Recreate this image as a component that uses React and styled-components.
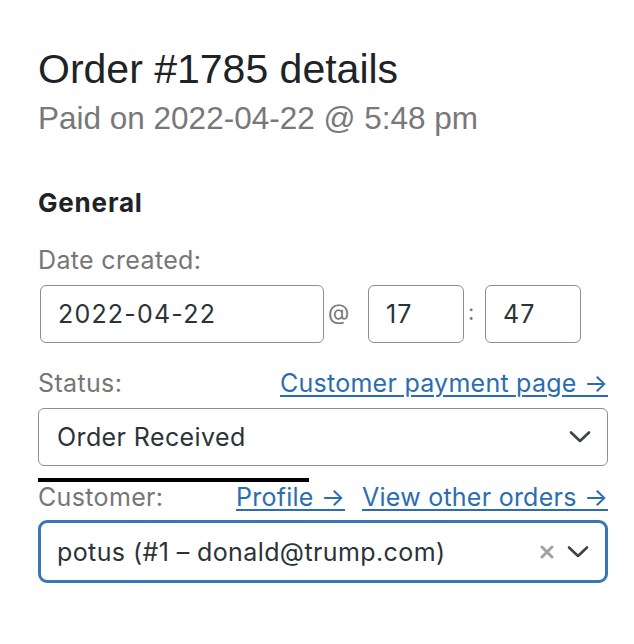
import React from "react";
import styled, { createGlobalStyle } from "styled-components";

const Global = createGlobalStyle`
  html, body { margin: 0; padding: 0; background: #fff; }
  body { font-family: Inter, "Noto Sans", sans-serif; -webkit-font-smoothing: antialiased; }
`;

const Panel = styled.div`
  width: 634px;
  box-sizing: border-box;
  padding: 46px 26px 40px 38px;
  display: flex;
  flex-direction: column;
`;

const Title = styled.h2`
  margin: 0;
  font-family: "Liberation Sans", Arial, sans-serif;
  font-weight: 400;
  font-size: 41px;
  line-height: 46px;
  color: #1d2327;
`;

const Subtitle = styled.p`
  margin: 7px 0 0;
  font-family: "Liberation Sans", Arial, sans-serif;
  font-size: 31.5px;
  line-height: 38px;
  color: #787878;
`;

const SectionHeading = styled.h3`
  margin: 50px 0 0;
  font-size: 26px;
  line-height: 32px;
  font-weight: 700;
  letter-spacing: 0.8px;
  color: #1d2327;
`;

const LabelRow = styled.div`
  margin-top: ${(p) => p.$top}px;
  display: flex;
  align-items: baseline;
  gap: 17px;
`;

const Label = styled.span`
  font-size: 25px;
  line-height: 30px;
  letter-spacing: 0.35px;
  color: #767676;
  margin-right: auto;
`;

const Link = styled.a`
  font-size: 25px;
  line-height: 30px;
  letter-spacing: 0.25px;
  color: #2a6eb0;
  text-decoration: underline;
  text-underline-offset: 3px;
  text-decoration-thickness: 2px;
  white-space: nowrap;
`;

const DateRow = styled.div`
  margin-top: 10px;
  display: flex;
  align-items: center;
`;

const Field = styled.div`
  box-sizing: border-box;
  width: ${(p) => p.$w}px;
  margin-left: ${(p) => p.$ml || 0}px;
  height: 58px;
  border: 1.5px solid #8c8f94;
  border-radius: 6px;
  padding: 0 17px;
  display: flex;
  align-items: center;
  font-size: 25px;
  letter-spacing: 1.2px;
  color: #2c3338;
`;

const Sep = styled.span`
  box-sizing: border-box;
  width: ${(p) => p.$w}px;
  padding-left: ${(p) => p.$pl}px;
  font-size: ${(p) => p.$size}px;
  color: #787878;
  margin-top: -4px;
`;

const Select = styled.div`
  margin-top: ${(p) => p.$top}px;
  box-sizing: border-box;
  height: ${(p) => (p.$focused ? 63 : 58)}px;
  border: ${(p) => (p.$focused ? "3.5px solid #3877b3" : "1.5px solid #8c8f94")};
  border-radius: ${(p) => (p.$focused ? 9 : 6)}px;
  padding: 0 16px 0 ${(p) => (p.$focused ? 16 : 18)}px;
  display: flex;
  align-items: center;
  gap: 13px;
  font-size: 25px;
  letter-spacing: 0.4px;
  color: #2c3338;
`;

const Value = styled.span`
  flex: 1;
`;

const Clear = styled.span`
  display: flex;
  align-items: center;
`;

const Rule = styled.div`
  margin-top: 12px;
  width: 271px;
  height: 4px;
  background: #000;
`;

const Chevron = () => (
  <svg width="22" height="14" viewBox="0 0 22 14" fill="none">
    <path d="M2 2.5 L11 11 L20 2.5" stroke="#3c434a" strokeWidth="2.6" strokeLinecap="round" strokeLinejoin="round" />
  </svg>
);

const Cross = () => (
  <svg width="14" height="14" viewBox="0 0 14 14" fill="none">
    <path d="M2 2 L12 12 M12 2 L2 12" stroke="#a0a3a6" strokeWidth="3" strokeLinecap="round" />
  </svg>
);

export default function App() {
  return (
    <>
      <Global />
      <Panel>
        <Title>Order #1785 details</Title>
        <Subtitle>Paid on 2022-04-22 @ 5:48 pm</Subtitle>

        <SectionHeading>General</SectionHeading>

        <LabelRow $top={26}>
          <Label>Date created:</Label>
        </LabelRow>
        <DateRow>
          <Field $w={284} $ml={2}>2022-04-22</Field>
          <Sep $w={44} $pl={4} $size={22}>@</Sep>
          <Field $w={96}>17</Field>
          <Sep $w={21} $pl={4} $size={22}>:</Sep>
          <Field $w={96}>47</Field>
        </DateRow>

        <LabelRow $top={25}>
          <Label>Status:</Label>
          <Link href="#">Customer payment page →</Link>
        </LabelRow>
        <Select $top={10}>
          <Value>Order Received</Value>
          <Chevron />
        </Select>

        <Rule />

        <LabelRow $top={0}>
          <Label>Customer:</Label>
          <Link href="#">Profile →</Link>
          <Link href="#">View other orders →</Link>
        </LabelRow>
        <Select $focused $top={8}>
          <Value>potus (#1 – donald@trump.com)</Value>
          <Clear>
            <Cross />
          </Clear>
          <Chevron />
        </Select>
      </Panel>
    </>
  );
}
